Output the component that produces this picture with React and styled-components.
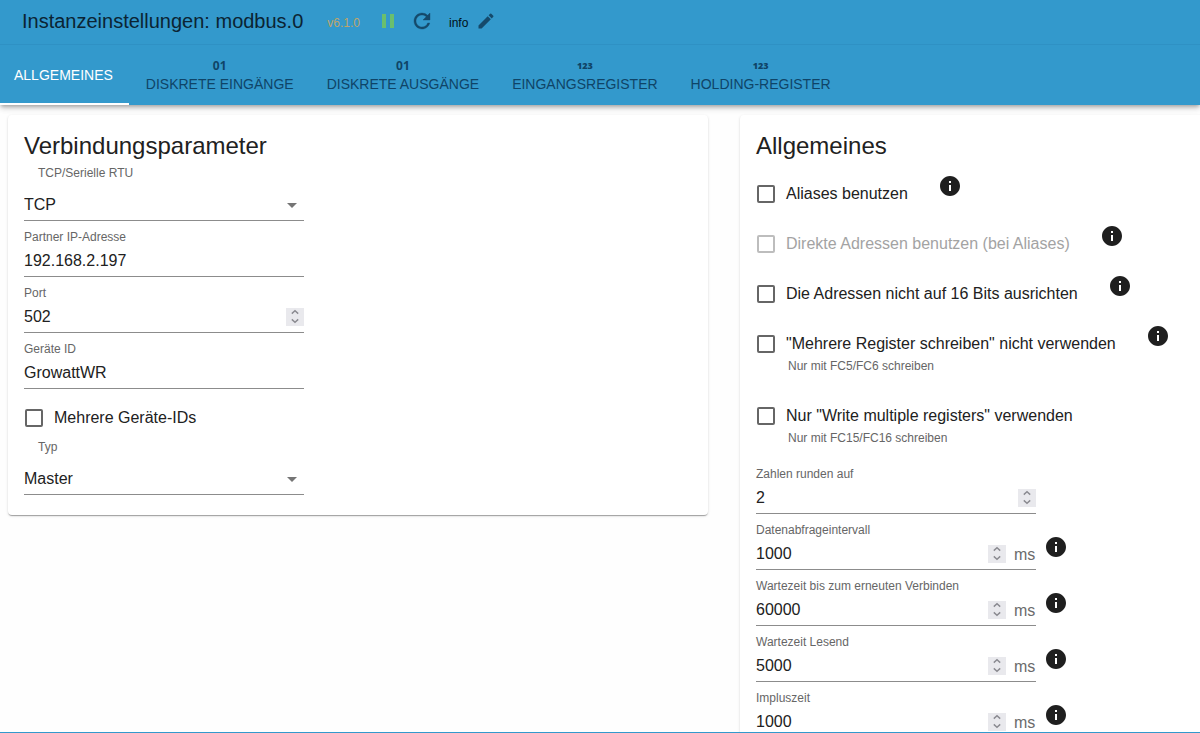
import React, { useId, useState } from "react";
import styled, { createGlobalStyle, css } from "styled-components";
import { MdArrowDropDown, MdEdit, MdInfo, MdPause } from "react-icons/md";

const GlobalStyle = createGlobalStyle`
  *, *::before, *::after { box-sizing: border-box; }
  body { margin: 0; background: #fefefe; }
  body, button, input, select {
    font-family: "Liberation Sans", Arial, Helvetica, sans-serif;
    color: #212121;
  }
`;

const Dialog = styled.div`
  display: flex;
  flex-direction: column;
  height: 100vh;
  overflow: hidden;
  border-bottom: 1px solid #3399cc;
`;

const AppBar = styled.header`
  flex: none;
  background: #3399cc;
  box-shadow: 0 2px 4px -1px rgba(0, 0, 0, 0.3), 0 4px 5px rgba(0, 0, 0, 0.1),
    0 1px 10px rgba(0, 0, 0, 0.08);
`;

const TitleBar = styled.div`
  display: flex;
  align-items: center;
  height: 44px;
  padding: 0 22px 2px;
`;

const Title = styled.h1`
  margin: 0 24px 0 0;
  font-size: 20px;
  font-weight: 400;
  line-height: 24px;
  color: #0b2433;
`;

const Version = styled.span`
  margin-right: 16px;
  padding-top: 4px;
  font-size: 12px;
  line-height: 16px;
  color: #bfa56a;
`;

const LogLevel = styled.span`
  margin: 0 8px 0 15px;
  padding-top: 4px;
  font-size: 12px;
  line-height: 16px;
  color: #001018;
`;

const IconButton = styled.button`
  display: flex;
  margin: 0 ${(p) => p.$gap || 0}px 0 0;
  padding: 0;
  border: 0;
  background: none;
  color: ${(p) => p.$color || "#154a6b"};
  cursor: pointer;
`;

const Tabs = styled.nav`
  display: flex;
  gap: 1px;
  height: 61px;
  margin-left: -2px;
  border-top: 1px solid #2f91c4;
`;

const Tab = styled.button`
  display: flex;
  flex-direction: column;
  align-items: center;
  justify-content: center;
  padding: 2px 16px 0;
  border: 0;
  border-bottom: 2px solid ${(p) => (p.$active ? "#fff" : "transparent")};
  background: none;
  color: ${(p) => (p.$active ? "#fff" : "#0f4467")};
  font-size: 14px;
  line-height: 18px;
  text-transform: uppercase;
  white-space: nowrap;
  cursor: pointer;
`;

const TabIcon = styled.span`
  height: 18px;
  line-height: 18px;
  ${(p) =>
    p.$kind === "bits"
      ? css`
          font-family: "Noto Sans", sans-serif;
          font-size: 12px;
          font-weight: 700;
        `
      : css`
          font-family: "Open Sans", sans-serif;
          font-size: 9px;
          font-weight: 800;
        `}
`;

const Content = styled.main`
  flex: 1;
  min-height: 0;
  display: grid;
  grid-template-columns: repeat(2, calc(100vw * 7 / 12));
  align-items: start;
  gap: 32px;
  padding: 10px 8px;
  overflow: hidden;
`;

const Card = styled.section`
  padding: 16px 16px 20px;
  border-radius: 4px;
  background: #fff;
  box-shadow: 0 2px 1px -1px rgba(0, 0, 0, 0.2), 0 1px 1px rgba(0, 0, 0, 0.14),
    0 1px 3px rgba(0, 0, 0, 0.12);
`;

const Heading = styled.h2`
  margin: 0 0 4px;
  font-size: 24px;
  font-weight: 400;
  line-height: 30px;
`;

const Row = styled.div`
  display: flex;
  align-items: flex-start;
`;

const Field = styled.div`
  width: 280px;
  padding-top: ${(p) => (p.$select ? 0 : 8)}px;
`;

const Label = styled.label`
  display: block;
  font-size: 12px;
  line-height: 16px;
  color: #666;
  ${(p) =>
    p.$select &&
    css`
      padding-left: 14px;
      margin-bottom: 8px;
    `}
`;

const Control = styled.div`
  display: flex;
  align-items: center;
  height: 32px;
  border-bottom: 1px solid #8c8c8c;
`;

const Input = styled.input`
  flex: 1;
  min-width: 0;
  height: 31px;
  padding: 0;
  border: 0;
  outline: 0;
  background: none;
  font-size: 16px;
  appearance: textfield;
  &::-webkit-inner-spin-button,
  &::-webkit-outer-spin-button {
    appearance: none;
    margin: 0;
  }
`;

const SelectBox = styled.div`
  display: grid;
  align-items: center;
  justify-items: end;
  height: 32px;
  border-bottom: 1px solid #8c8c8c;
  color: #757575;
  svg {
    grid-area: 1 / 1;
    pointer-events: none;
  }
`;

const Select = styled.select`
  grid-area: 1 / 1;
  width: 100%;
  height: 31px;
  padding: 0;
  border: 0;
  outline: 0;
  background: none;
  font-size: 16px;
  appearance: none;
`;

const Spinner = styled.span`
  display: grid;
  grid-template-rows: 9px 9px;
  width: 18px;
  background: #e9e9ed;
`;

const SpinButton = styled.button`
  display: flex;
  align-items: center;
  justify-content: center;
  padding: 0;
  border: 0;
  background: none;
  color: #8a8a90;
`;

const Unit = styled.span`
  width: 30px;
  padding: 2px 0 0 8px;
  font-size: 16px;
  line-height: 20px;
  color: #6b6b6b;
`;

const InfoButton = styled(IconButton)`
  margin: ${(p) => (p.$field ? "21px 0 0 8px" : "9px 0 0 30px")};
  color: #1f1f1f;
`;

const CheckLabel = styled.label`
  display: flex;
  align-items: center;
  height: 42px;
  margin-top: 8px;
  font-size: 16px;
  line-height: 20px;
  color: ${(p) => (p.$disabled ? "#a3a3a3" : "#212121")};
`;

const Checkbox = styled.input`
  appearance: none;
  width: 18px;
  height: 18px;
  margin: 0 11px 0 1px;
  border: 2px solid #666;
  border-radius: 2px;
  &:checked { background: #3399cc; }
  &:disabled { border-color: #bdbdbd; }
`;

const Helper = styled.p`
  margin: -7px 0 0 32px;
  font-size: 12px;
  line-height: 16px;
  color: #666;
`;

const CheckItem = styled.div`
  & + & > ${Helper} {
    margin-bottom: 13px;
  }
  &:last-child > ${Helper} {
    margin-bottom: 0;
  }
`;

const CheckGroup = styled.div`
  padding-bottom: ${(p) => p.$space || 0}px;
`;

function Info({ field, topic }) {
  return (
    <InfoButton type="button" $field={field} aria-label={`Info: ${topic}`}>
      <MdInfo size={24} />
    </InfoButton>
  );
}

function RefreshIcon() {
  return (
    <svg width="24" height="24" viewBox="0 0 24 24" fill="currentColor" stroke="currentColor" strokeWidth="0.4">
      <path d="M17.65 6.35A7.958 7.958 0 0 0 12 4c-4.42 0-7.99 3.58-7.99 8s3.57 8 7.99 8c3.73 0 6.84-2.55 7.73-6h-2.08A5.99 5.99 0 0 1 12 18c-3.31 0-6-2.69-6-6s2.69-6 6-6c1.66 0 3.14.69 4.22 1.78L13 11h7V4l-2.35 2.35z" />
    </svg>
  );
}

function Chevron({ up }) {
  return (
    <svg width="10" height="6" viewBox="0 0 10 6" fill="none" stroke="currentColor" strokeWidth="1.4">
      <path d={up ? "M1.8 4.6L5 1.8l3.2 2.8" : "M1.8 1.4L5 4.2l3.2-2.8"} />
    </svg>
  );
}

function TextField({ label, value, number, unit, info }) {
  const id = useId();
  const [current, setCurrent] = useState(value);
  const step = (by) => setCurrent(String(Number(current) + by));
  return (
    <Row>
      <Field>
        <Label htmlFor={id}>{label}</Label>
        <Control>
          <Input
            id={id}
            type={number ? "number" : "text"}
            value={current}
            onChange={(e) => setCurrent(e.target.value)}
          />
          {number && (
            <Spinner>
              <SpinButton type="button" aria-label={`${label} +`} onClick={() => step(1)}>
                <Chevron up />
              </SpinButton>
              <SpinButton type="button" aria-label={`${label} -`} onClick={() => step(-1)}>
                <Chevron />
              </SpinButton>
            </Spinner>
          )}
          {unit && <Unit>{unit}</Unit>}
        </Control>
      </Field>
      {info && <Info field topic={label} />}
    </Row>
  );
}

function SelectField({ label, options }) {
  const id = useId();
  return (
    <Field $select>
      <Label $select htmlFor={id}>{label}</Label>
      <SelectBox>
        <Select id={id}>
          {options.map((o) => (
            <option key={o}>{o}</option>
          ))}
        </Select>
        <MdArrowDropDown size={24} />
      </SelectBox>
    </Field>
  );
}

function CheckField({ label, helper, disabled, info }) {
  const id = useId();
  return (
    <CheckItem>
      <Row>
        <CheckLabel htmlFor={id} $disabled={disabled}>
          <Checkbox id={id} type="checkbox" disabled={disabled} />
          {label}
        </CheckLabel>
        {info && <Info topic={label} />}
      </Row>
      {helper && <Helper>{helper}</Helper>}
    </CheckItem>
  );
}

const tabs = [
  { label: "Allgemeines" },
  { label: "Diskrete Eingänge", icon: "01", kind: "bits" },
  { label: "Diskrete Ausgänge", icon: "01", kind: "bits" },
  { label: "Eingangsregister", icon: "123", kind: "numbers" },
  { label: "Holding-Register", icon: "123", kind: "numbers" },
];

export default function App() {
  const [active, setActive] = useState(0);
  return (
    <Dialog>
      <GlobalStyle />
      <AppBar>
        <TitleBar>
          <Title>Instanzeinstellungen: modbus.0</Title>
          <Version>v6.1.0</Version>
          <IconButton type="button" aria-label="Pause" $color="#6abf6e" $gap={10}>
            <MdPause size={24} />
          </IconButton>
          <IconButton type="button" aria-label="Neu starten">
            <RefreshIcon />
          </IconButton>
          <LogLevel>info</LogLevel>
          <IconButton type="button" aria-label="Bearbeiten">
            <MdEdit size={20} />
          </IconButton>
        </TitleBar>
        <Tabs>
          {tabs.map((tab, i) => (
            <Tab key={tab.label} type="button" $active={i === active} onClick={() => setActive(i)}>
              {tab.icon && <TabIcon $kind={tab.kind}>{tab.icon}</TabIcon>}
              {tab.label}
            </Tab>
          ))}
        </Tabs>
      </AppBar>
      <Content>
        <Card>
          <Heading>Verbindungsparameter</Heading>
          <SelectField label="TCP/Serielle RTU" options={["TCP"]} />
          <TextField label="Partner IP-Adresse" value="192.168.2.197" />
          <TextField label="Port" value="502" number />
          <TextField label="Geräte ID" value="GrowattWR" />
          <CheckGroup>
            <CheckField label="Mehrere Geräte-IDs" />
          </CheckGroup>
          <SelectField label="Typ" options={["Master", "Slave"]} />
        </Card>
        <Card>
          <Heading>Allgemeines</Heading>
          <CheckGroup $space={12}>
            <CheckField label="Aliases benutzen" info />
            <CheckField label="Direkte Adressen benutzen (bei Aliases)" disabled info />
            <CheckField label="Die Adressen nicht auf 16 Bits ausrichten" info />
            <CheckField
              label={'"Mehrere Register schreiben" nicht verwenden'}
              helper="Nur mit FC5/FC6 schreiben"
              info
            />
            <CheckField
              label={'Nur "Write multiple registers" verwenden'}
              helper="Nur mit FC15/FC16 schreiben"
            />
          </CheckGroup>
          <TextField label="Zahlen runden auf" value="2" number />
          <TextField label="Datenabfrageintervall" value="1000" number unit="ms" info />
          <TextField label="Wartezeit bis zum erneuten Verbinden" value="60000" number unit="ms" info />
          <TextField label="Wartezeit Lesend" value="5000" number unit="ms" info />
          <TextField label="Impluszeit" value="1000" number unit="ms" info />
        </Card>
      </Content>
    </Dialog>
  );
}
